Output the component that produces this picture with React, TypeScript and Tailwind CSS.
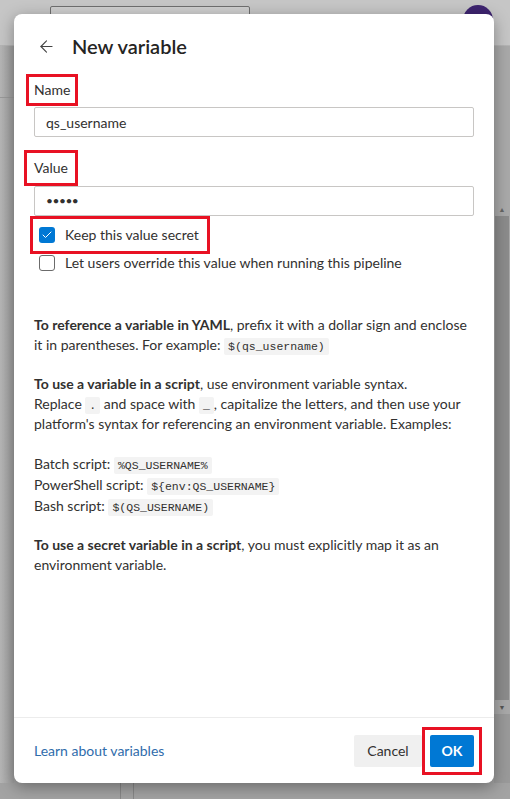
import { ArrowLeft, Check } from "lucide-react"

function Code({ children }: { children: React.ReactNode }) {
    return (
        <code className="bg-[#f3f3f3] px-[4px] py-[2px] rounded-[2px] text-[11.5px] leading-none text-[#323130] font-['Liberation_Mono',monospace]">
            {children}
        </code>
    )
}

export default function App() {
    return (
        <div className="relative w-[510px] h-[799px] overflow-hidden bg-[#a3a3a3] font-['Lato',sans-serif] text-[#323130]">
            {/* page behind the overlay */}
            <div className="flex flex-col h-full">
                <div className="h-[46px] bg-[#c6c6c6] flex items-start border-b border-[#b4b4b4]">
                    <div className="ml-[50px] mt-[6px] w-[200px] h-[20px] border border-[#6f6f6f] rounded-[2px] bg-[#cfcfcf]" />
                    <div className="ml-auto mr-[17px] mt-[5px] size-[30px] rounded-full bg-[#3e2470]" />
                </div>
                <div className="flex flex-1">
                    <div className="w-[14px] bg-gradient-to-r from-[#b6b6b6] to-[#9d9d9d] flex flex-col">
                        <div className="h-[52px] border-b border-[#999]" />
                    </div>
                    <div className="flex-1" />
                    <div className="w-[16px] flex flex-col bg-[#a9a9a9]">
                        <div className="h-[156px]" />
                        <div className="h-[14px] flex items-center justify-center text-[7px] text-[#666]">▲</div>
                        <div className="h-[484px] mx-[1px] bg-[#8c8c8c]" />
                        <div className="h-[14px] flex items-center justify-center text-[7px] text-[#555]">▼</div>
                        <div className="flex-1 bg-[#9a9a9a]" />
                    </div>
                </div>
                <div className="h-[16px] flex">
                    <div className="w-[120px]" />
                    <div className="w-[14px] border-x border-[#888]" />
                </div>
            </div>

            {/* dialog */}
            <div className="absolute left-[14px] top-[14px] w-[480px] h-[769px] bg-white rounded-[8px] shadow-[0_4px_16px_rgba(0,0,0,0.35)] flex flex-col">
                <div className="flex-1 px-5 pt-4">
                    <div className="h-8 flex items-center">
                        <ArrowLeft className="ml-[3px] size-[19px] text-[#444]" strokeWidth={1.4} />
                        <h1 className="ml-[16px] text-[20px] font-semibold leading-8 text-[#252423]">New variable</h1>
                    </div>

                    <div className="mt-[18px] h-5 leading-5 text-[14px]">
                        <span className="inline-block leading-4 outline-3 outline-[#e81123] outline-offset-[5px]">Name</span>
                    </div>
                    <div className="mt-[7px] h-[30px] border border-[#c8c6c4] rounded-[2px] px-[11px] flex items-center text-[14px]">
                        qs_username
                    </div>

                    <div className="mt-[21px] h-5 leading-5 text-[14px]">
                        <span className="inline-block leading-4 outline-3 outline-[#e81123] outline-offset-[7px]">Value</span>
                    </div>
                    <div className="mt-[8px] h-[30px] border border-[#c8c6c4] rounded-[2px] px-[11px] flex items-center text-[12px] tracking-[-0.5px]">
                        •••••
                    </div>

                    <div className="mt-[9px] h-5 flex items-center">
                        <div className="ml-[5px] flex items-center gap-[10px] outline-3 outline-[#e81123] outline-offset-[6px] pr-[2px]">
                            <span className="size-4 rounded-[3px] bg-[#0078d4] flex items-center justify-center">
                                <Check className="size-3 text-white" strokeWidth={2} />
                            </span>
                            <span className="text-[14px] leading-5">Keep this value secret</span>
                        </div>
                    </div>
                    <div className="mt-[8px] h-5 flex items-center">
                        <div className="ml-[5px] flex items-center gap-[10px]">
                            <span className="size-4 rounded-[3px] border border-[#6b6b6b]" />
                            <span className="text-[14px] leading-5">Let users override this value when running this pipeline</span>
                        </div>
                    </div>

                    <div className="mt-[42px] flex flex-col gap-[19px] text-[14px] leading-5">
                        <p>
                            <span className="font-bold">To reference a variable in YAML</span>, prefix it with a dollar sign and enclose it in parentheses. For example: <Code>$(qs_username)</Code>
                        </p>
                        <p>
                            <span className="font-bold">To use a variable in a script</span>, use environment variable syntax.
                            <br />
                            Replace <Code>.</Code> and space with <Code>_</Code>, capitalize the letters, and then use your
                            <br />
                            platform's syntax for referencing an environment variable. Examples:
                        </p>
                        <div className="leading-[21px]">
                            <div>Batch script: <Code>%QS_USERNAME%</Code></div>
                            <div>PowerShell script: <Code>{"${env:QS_USERNAME}"}</Code></div>
                            <div>Bash script: <Code>$(QS_USERNAME)</Code></div>
                        </div>
                        <p>
                            <span className="font-bold">To use a secret variable in a script</span>, you must explicitly map it as an environment variable.
                        </p>
                    </div>
                </div>

                <div className="h-[66px] border-t border-[#ececec] px-5 flex items-center">
                    <a className="text-[14px] text-[#2f6cab]">Learn about variables</a>
                    <div className="ml-auto flex gap-2">
                        <button className="h-8 w-[68px] rounded-[2px] bg-[#f0f0f0] text-[14px] text-[#323130]">Cancel</button>
                        <div className="flex outline-3 outline-[#e81123] outline-offset-[5px]">
                            <button className="h-8 w-[44px] rounded-[2px] bg-[#0078d4] text-[14px] font-bold text-white">OK</button>
                        </div>
                    </div>
                </div>
            </div>
        </div>
    )
}
